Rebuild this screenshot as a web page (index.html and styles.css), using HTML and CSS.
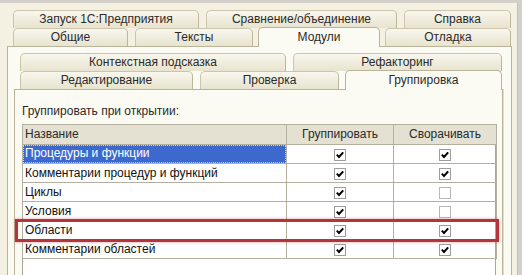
FILE: index.html
```html
<!DOCTYPE html>
<html>

<head>
   <title>Параметры</title>
   <link rel="stylesheet" href="styles.css">
</head>

<body>
   <div class="window">
      <div class="tab-row back">
         <div class="tab t-launch">Запуск 1С:Предприятия</div>
         <div class="tab t-compare">Сравнение/объединение</div>
         <div class="tab t-help">Справка</div>
      </div>
      <div class="tab-row front">
         <div class="tab t-common">Общие</div>
         <div class="tab t-texts">Тексты</div>
         <div class="tab active t-modules">Модули</div>
         <div class="tab t-debug">Отладка</div>
      </div>

      <div class="panel outer-panel">
         <div class="tab-row back">
            <div class="tab t-hint">Контекстная подсказка</div>
            <div class="tab t-refactor">Рефакторинг</div>
         </div>
         <div class="tab-row front">
            <div class="tab t-edit">Редактирование</div>
            <div class="tab t-check">Проверка</div>
            <div class="tab active t-group">Группировка</div>
         </div>

         <div class="panel inner-panel">
            <div class="caption">Группировать при открытии:</div>
            <div class="grid-wrap">
               <table class="grid">
                  <colgroup>
                     <col class="col-name">
                     <col class="col-flag">
                     <col class="col-flag2">
                  </colgroup>
                  <thead>
                     <tr>
                        <th class="left">Название</th>
                        <th>Группировать</th>
                        <th>Сворачивать</th>
                     </tr>
                  </thead>
                  <tbody>
                     <tr class="selected">
                        <td><span class="focus">Процедуры и функции</span></td>
                        <td><span class="check on"></span></td>
                        <td><span class="check on"></span></td>
                     </tr>
                     <tr>
                        <td>Комментарии процедур и функций</td>
                        <td><span class="check on"></span></td>
                        <td><span class="check on"></span></td>
                     </tr>
                     <tr>
                        <td>Циклы</td>
                        <td><span class="check on"></span></td>
                        <td><span class="check"></span></td>
                     </tr>
                     <tr>
                        <td>Условия</td>
                        <td><span class="check on"></span></td>
                        <td><span class="check"></span></td>
                     </tr>
                     <tr>
                        <td>Области</td>
                        <td><span class="check on"></span></td>
                        <td><span class="check on"></span></td>
                     </tr>
                     <tr>
                        <td>Комментарии областей</td>
                        <td><span class="check on"></span></td>
                        <td><span class="check on"></span></td>
                     </tr>
                  </tbody>
               </table>
               <div class="highlight"></div>
            </div>
         </div>
      </div>
   </div>
</body>

</html>
```

FILE: styles.css
```css
body {
   margin: 0;
   width: 522px;
   height: 275px;
   overflow: hidden;
   background-color: #d2d0c8;
   font-family: 'Liberation Sans', Arial, sans-serif;
   font-size: 12px;
   color: #111;
}

.window {
   box-sizing: border-box;
   width: 518px;
   height: 272px;
   margin-top: 3px;
   padding: 7px 0 0 7px;
   background-color: #f4f1e2;
   border-right: 1px solid #c4c0aa;
}

/* tab strips */
.tab-row {
   display: flex;
   height: 18px;
   margin-left: 6px;
}

.tab {
   box-sizing: border-box;
   height: 18px;
   line-height: 17px;
   text-align: center;
   color: #2a2a2a;
   background: linear-gradient(#f9f7ee, #e7e3ce);
   border: 1px solid #cbc6ab;
   border-bottom: none;
   border-right-color: #bcb69a;
   border-radius: 5px 5px 0 0;
   white-space: nowrap;
}

.tab.active {
   position: relative;
   z-index: 2;
   height: 20px;
   margin-top: -1px;
   margin-bottom: -1px;
   padding-top: 1px;
   background: #fcfbf3;
   border-color: #b9b49a;
}

.t-launch { width: 186px; }
.t-compare { width: 191px; margin-left: 7px; }
.t-help { width: 107px; margin-left: 7px; }

.t-common { width: 115px; }
.t-texts { width: 118px; margin-left: 7px; }
.t-modules { width: 122px; margin-left: 5px; }
.t-debug { width: 126px; margin-left: 5px; }

.t-hint { width: 266px; }
.t-refactor { width: 209px; margin-left: 7px; }

.t-edit { width: 173px; }
.t-check { width: 139px; margin-left: 7px; }
.t-group { width: 157px; margin-left: 6px; }

/* panels */
.panel {
   box-sizing: border-box;
   position: relative;
   background-color: #fcfbf3;
   border: 1px solid #b9b49a;
   border-bottom: none;
}

.outer-panel {
   width: 505px;
   height: 229px;
   padding: 6px 0 0 6px;
}

.outer-panel .tab-row {
   margin-left: 6px;
}

.inner-panel {
   width: 489px;
   height: 186px;
   padding: 14px 0 0 7px;
   box-shadow: 1px 0 0 #e2ddc6;
}

.caption {
   height: 14px;
   line-height: 14px;
   color: #2a2a2a;
}

/* grid */
.grid-wrap {
   position: relative;
   width: 474px;
   height: 152px;
   margin-top: 6px;
   background-color: #fff;
   border-left: 1px solid #a9a694;
   border-right: 1px solid #a9a694;
   box-sizing: border-box;
}

.grid {
   width: 474px;
   margin-left: -1px;
   border-collapse: collapse;
   table-layout: fixed;
}

.col-name { width: 264px; }
.col-flag { width: 107px; }
.col-flag2 { width: 103px; }

.grid th,
.grid td {
   border: 1px solid #b3b09f;
   padding: 0 2px;
   height: 18px;
   line-height: 17px;
   font-weight: normal;
   white-space: nowrap;
   overflow: hidden;
}

.grid th {
   height: 19px;
   background-color: #e4e1d3;
   color: #2a2a2a;
}

.grid th.left {
   text-align: left;
}

.grid td + td {
   text-align: center;
}

.grid tr.selected td:first-child {
   background-color: #3d69cf;
   color: #fff;
   padding: 0;
}

.focus {
   display: block;
   height: 16px;
   line-height: 15px;
   padding-left: 1px;
   border: 1px dotted #c9d4f0;
}

.check {
   display: inline-block;
   box-sizing: border-box;
   width: 12px;
   height: 12px;
   margin-top: 3px;
   vertical-align: top;
   background-color: #fff;
   border: 1px solid #b8b8b8;
}

.check.on {
   border-color: #9d9d9d;
   background: #fff url("data:image/svg+xml;utf8,<svg xmlns='http://www.w3.org/2000/svg' width='10' height='10'><path d='M1.8 4.6 L4 7 L8.2 2.4' fill='none' stroke='black' stroke-width='2'/></svg>") no-repeat center;
}

/* red marker around the "Области" row */
.highlight {
   position: absolute;
   left: -8px;
   top: 95px;
   width: 484px;
   height: 23px;
   box-sizing: border-box;
   border: 3px solid #b7333b;
   box-shadow: 0 0 3px rgba(190, 50, 60, 0.45);
   pointer-events: none;
}
```
